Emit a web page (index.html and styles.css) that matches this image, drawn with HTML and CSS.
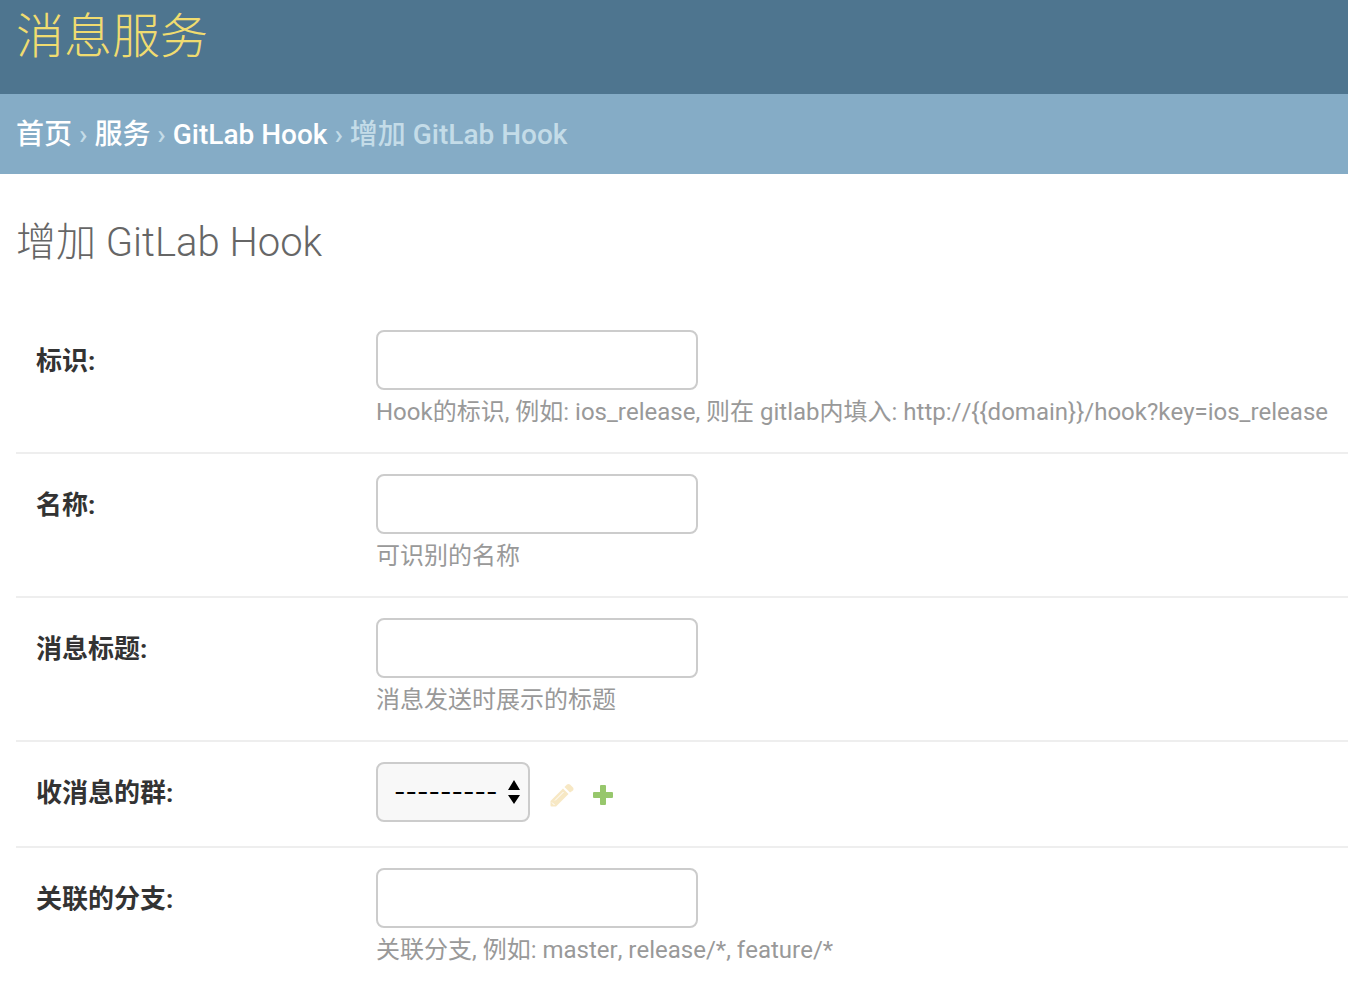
FILE: index.html
```html
<!DOCTYPE html>
<html lang="zh-CN">
<head>
<meta charset="utf-8">
<title>增加 GitLab Hook</title>
<link rel="stylesheet" href="styles.css">
</head>
<body>
<header class="header"><div class="site-name">消息服务</div></header>
<nav class="breadcrumbs" aria-label="breadcrumbs">
<a href="#">首页</a> › <a href="#">服务</a> › <a href="#">GitLab Hook</a> › 增加 GitLab Hook
</nav>
<main class="content">
<h1 class="title">增加 GitLab Hook</h1>
<form>
<div class="row">
<label class="label" for="key">标识:</label>
<div class="field"><input class="text" id="key" type="text"><p class="help">Hook的标识, 例如: ios_release, 则在 gitlab内填入: http://{{domain}}/hook?key=ios_release</p></div>
</div>
<div class="row">
<label class="label" for="name">名称:</label>
<div class="field"><input class="text" id="name" type="text"><p class="help">可识别的名称</p></div>
</div>
<div class="row">
<label class="label" for="subject">消息标题:</label>
<div class="field"><input class="text" id="subject" type="text"><p class="help">消息发送时展示的标题</p></div>
</div>
<div class="row">
<label class="label" for="group">收消息的群:</label>
<div class="field related">
<div class="select-box">
<select class="select" id="group"><option>---------</option></select>
<svg class="arrows" viewBox="0 0 12 24" aria-hidden="true"><path d="M6 0l6 10H0zM6 24l6-9H0z"/></svg>
</div>
<a class="edit" href="#" aria-label="修改"><svg class="icon" viewBox="0 0 24 24"><path fill="#e8b440" d="M1.500 23.500q-1 0-1-1V18L13 5.500l5.500 5.500L6 23.500zM14.500 4l2.500-2.500q1.500-1 3 0l3 3q1 1.500 0 3L20 9.500z"/><path d="M5 17.500L13.500 9" stroke="#fff" fill="none"/><path d="M2 19.500L4.500 22" stroke="#fff" fill="none"/></svg></a>
<a class="add" href="#" aria-label="增加"><svg class="icon" viewBox="0 0 24 24"><path fill="#97c76c" d="M11 2h4q1 0 1 1v6h6q1 0 1 1v4q0 1-1 1h-6v6q0 1-1 1h-4q-1 0-1-1v-6H4q-1 0-1-1v-4q0-1 1-1h6V3q0-1 1-1z"/></svg></a>
</div>
</div>
<div class="row">
<label class="label" for="branch">关联的分支:</label>
<div class="field"><input class="text" id="branch" type="text"><p class="help">关联分支, 例如: master, release/*, feature/*</p></div>
</div>
</form>
</main>
</body>
</html>
```
FILE: styles.css
```css
* { box-sizing: border-box; }
body { margin: 0; background: #fff; color: #333; font-family: Roboto, "Noto Sans CJK SC", sans-serif; }
.header { padding: 0 16px 20px; background: #4e758f; }
.site-name { color: #f0dc70; font-size: 48px; font-weight: 300; line-height: 74px; }
.breadcrumbs { padding: 20px 16px 18px; background: #85acc6; color: #c4dce8; font-size: 28px; line-height: 42px; font-weight: 500; }
.breadcrumbs a { color: #fff; text-decoration: none; }
.content { padding: 40px 0 0 16px; }
.title { margin: 0 0 38px; color: #666; font-size: 40px; font-weight: 300; line-height: 58px; }
.row { display: flex; align-items: flex-start; padding: 20px 0 24px 20px; border-bottom: 2px solid #eee; }
.label { flex: 0 0 340px; padding-top: 2px; font-size: 26px; font-weight: 700; line-height: 58px; }
.field { flex: 1; min-width: 0; }
.text { display: block; width: 322px; height: 60px; padding: 10px 12px; border: 2px solid #ccc; border-radius: 8px; background: #fff; font: 26px Roboto, sans-serif; }
.help { margin: 8px 0 2px; color: #999; font-size: 24px; line-height: 28px; font-kerning: none; white-space: nowrap; }
.related { display: flex; align-items: center; }
.select-box { position: relative; }
.select { display: block; appearance: none; width: 154px; height: 60px; padding: 0 16px; border: 2px solid #ccc; border-radius: 8px; background: #f8f8f8; color: #000; font: 25px Inter, sans-serif; }
.arrows { position: absolute; right: 10px; top: 18px; width: 12px; height: 24px; pointer-events: none; }
.edit { margin: 6px 0 0 20px; opacity: .3; }
.add { margin: 6px 0 0 16px; }
.icon { display: block; width: 24px; height: 24px; }
```
